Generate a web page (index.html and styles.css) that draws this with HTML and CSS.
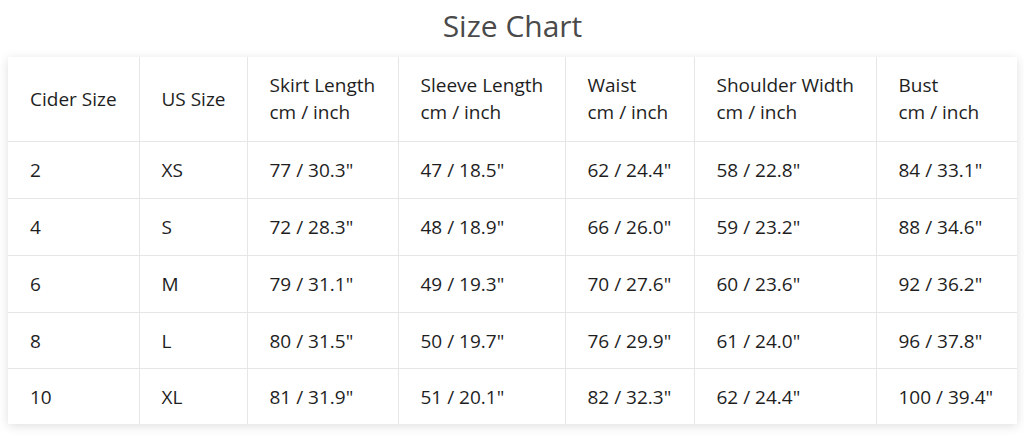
FILE: index.html
```html
<!DOCTYPE html>
<html>
<head>
<meta charset="utf-8">
<link rel="stylesheet" href="styles.css">
</head>
<body>
<div class="page">
  <h1 class="title">Size Chart</h1>
  <table class="chart">
    <colgroup>
      <col class="c1"><col class="c2"><col class="c3"><col class="c4"><col class="c5"><col class="c6"><col class="c7">
    </colgroup>
    <thead>
      <tr>
        <th>Cider Size</th>
        <th>US Size</th>
        <th>Skirt Length<br>cm / inch</th>
        <th>Sleeve Length<br>cm / inch</th>
        <th>Waist<br>cm / inch</th>
        <th>Shoulder Width<br>cm / inch</th>
        <th>Bust<br>cm / inch</th>
      </tr>
    </thead>
    <tbody>
      <tr><td>2</td><td>XS</td><td>77 / 30.3"</td><td>47 / 18.5"</td><td>62 / 24.4"</td><td>58 / 22.8"</td><td>84 / 33.1"</td></tr>
      <tr><td>4</td><td>S</td><td>72 / 28.3"</td><td>48 / 18.9"</td><td>66 / 26.0"</td><td>59 / 23.2"</td><td>88 / 34.6"</td></tr>
      <tr><td>6</td><td>M</td><td>79 / 31.1"</td><td>49 / 19.3"</td><td>70 / 27.6"</td><td>60 / 23.6"</td><td>92 / 36.2"</td></tr>
      <tr class="short"><td>8</td><td>L</td><td>80 / 31.5"</td><td>50 / 19.7"</td><td>76 / 29.9"</td><td>61 / 24.0"</td><td>96 / 37.8"</td></tr>
      <tr class="short"><td>10</td><td>XL</td><td>81 / 31.9"</td><td>51 / 20.1"</td><td>82 / 32.3"</td><td>62 / 24.4"</td><td>100 / 39.4"</td></tr>
    </tbody>
  </table>
</div>
</body>
</html>
```

FILE: styles.css
```css
html, body {
  margin: 0;
  padding: 0;
  background: #ffffff;
}
.page {
  width: 1024px;
  height: 446px;
  padding: 0 7px 0 8px;
  box-sizing: border-box;
  font-family: "Open Sans", "Noto Sans", sans-serif;
  color: #1e1e1e;
}
.title {
  margin: 0;
  height: 57px;
  line-height: 52px;
  text-align: center;
  font-size: 30px;
  font-weight: 400;
  color: #4a4a4a;
}
.chart {
  width: 1009px;
  table-layout: fixed;
  border-collapse: collapse;
  background: #ffffff;
  box-shadow: 0 2px 10px rgba(0, 0, 0, 0.13);
  font-size: 19px;
}
.c1 { width: 131px; }
.c2 { width: 108px; }
.c3 { width: 151px; }
.c4 { width: 167px; }
.c5 { width: 129px; }
.c6 { width: 182px; }
.c7 { width: 141px; }
.chart th,
.chart td {
  border: 1px solid #e6e6e6;
  padding: 0 0 0 22px;
  text-align: left;
  vertical-align: middle;
  font-weight: 400;
  white-space: nowrap;
}
.chart tr:first-child th { border-top: none; }
.chart th:first-child, .chart td:first-child { border-left: none; }
.chart th:last-child, .chart td:last-child { border-right: none; }
.chart tbody tr:last-child td { border-bottom: none; }
.chart thead th {
  height: 84px;
  line-height: 27px;
}
.chart tbody td {
  height: 56px;
}
.chart tbody tr.short td {
  height: 55px;
}
```
